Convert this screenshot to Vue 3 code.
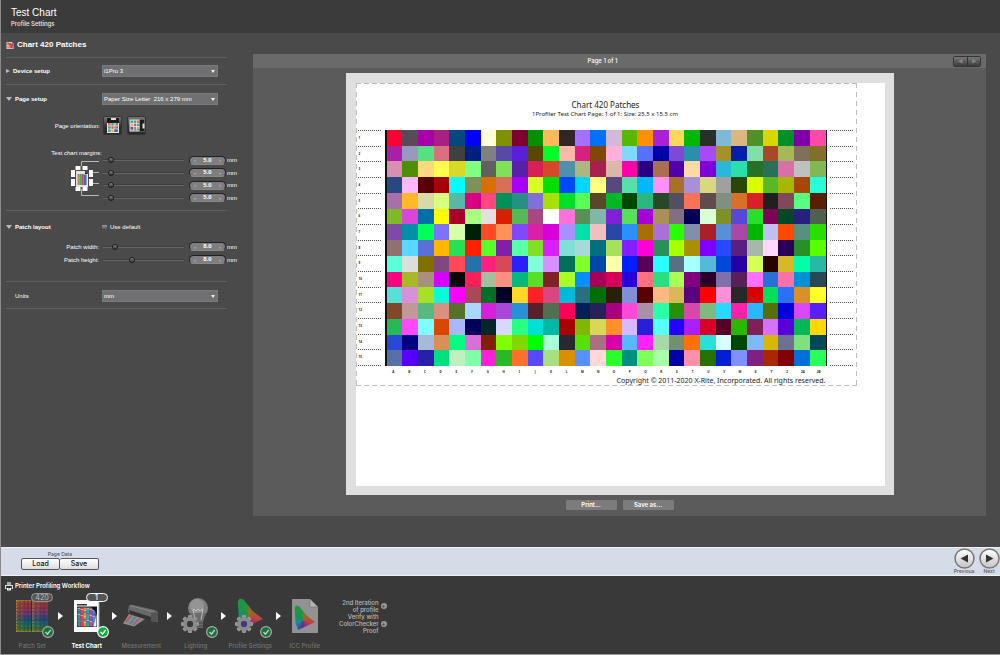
<script setup>
import { ref } from 'vue'

const device = ref('i1Pro 3')
const paper = ref('letter')
const unit = ref('mm')
const useDefault = ref(false)

const margins = ref([
  { name: 'Top margin', at: 7, value: '5.0' },
  { name: 'Left margin', at: 7, value: '5.0' },
  { name: 'Right margin', at: 7, value: '5.0' },
  { name: 'Bottom margin', at: 7, value: '5.0' }
])
const patchSizes = ref([
  { name: 'Patch width:', at: 12, value: '8.0' },
  { name: 'Patch height:', at: 34, value: '8.0' }
])

const rows = [
  'ff0030 574b57 a800a8 a82080 004a80 0000ff ffffd8 809000 800030 009000 ffb85c 302828 a870ff 0070ff d4b8d8 58b800 ff9000 a820d8 ffd858 00b800 283028 80b8d8 d8b880 509028 d8d800 009028 8000a8 ff48a8',
  'a820a8 9898c0 58e080 d87080 404040 002080 808080 5848a8 5820d8 584800 00ff28 ffb8a8 d82080 804800 ffb0d8 80d8ff 5870ff 0000a8 8048d8 2890a8 a848ff a89028 0020a8 80e0a8 a84828 a8b858 807058 807028',
  'd890b0 509000 ffd880 ffff50 d8d828 80ff80 606060 80e058 5820a8 d82058 d84828 5090a8 a8b880 a82050 d8b8a8 ff00a8 280080 a87050 5000a8 ffd8a8 8000d8 28b8d8 28e0a8 287028 287058 d870a8 c0c0c0 80b858',
  '284880 ffb8ff 580000 a80000 00ffff 809058 d87000 d87058 a800ff d8ff28 00e000 0048ff 00d8ff ffff80 584880 58e0a8 00b8ff ff90ff a87028 a890d8 d8d880 a0a0a0 284800 d8ff00 58b828 a8b800 a84800 28ffd8',
  'a870a8 ffb828 d8d8a8 d8ff80 58b8a8 d80080 ff4880 009058 289080 8070d8 a8e000 00e028 58ff58 584828 00b828 004800 28b880 284828 505060 ff7058 604c4c 809080 d87028 d82028 202020 804858 58ff80 582000',
  '80b828 d848d8 0070a8 ffff00 a80028 a8ff80 e0e0e0 d82000 58b858 a84880 ffffff ff70d8 589058 80b8a8 8020d8 58e058 a800d8 a89058 807080 000058 d8ffd8 809028 5848d8 28e028 800058 004828 282080 506050',
  '8048a8 0090a8 00ff58 8070ff d8ffa8 002000 ff4828 ff9058 8048ff d820a8 d800d8 a890ff 00e0a8 f0c0c0 2848a8 2890ff a87000 a870d8 28ff00 8090a8 a82028 5890d8 a848a8 00b800 c0c0f0 ff4800 589080 28e000',
  '907070 58d8ff 5870d8 ffb800 28e058 ff2000 58ff28 8020a8 58ffa8 80e028 d820ff 80e0d8 a8d8d8 007080 a8e058 8020ff ff00d8 289058 a8ff00 a89000 8000ff 2848ff 582080 a8b8a8 ffd8ff 280058 289028 58ff00',
  '58ffd8 d8e0d8 807000 804880 ff4858 2870a8 ff2080 d84858 2820ff 80ffd8 d890ff 007058 80ff28 0048a8 ffffa8 0020ff 580058 28ffff 587080 a8ffff 58b8d8 0048d8 2800a8 d8ff58 280000 d8b828 00ffa8 28b8a8',
  'ff0080 a8b828 a89080 d800ff 080808 ff2058 a0c0a0 ff9080 00b880 58e028 802028 a8ff28 0090ff a80058 d80058 2800d8 ff7080 28e080 a8ff58 800080 280028 8070a8 582058 ff70ff 2870d8 ff70a8 0090d8 284858',
  '58e0d8 d890d8 a8e028 00ffd8 ff00ff a84858 007028 000028 ffd828 ff2028 d84880 00b8d8 287080 007000 282008 8090d8 580000 ffb880 d8b858 580080 ff0000 ff90d8 282828 d80000 00e058 2870ff d89028 ffff28',
  '804828 c09898 58b880 d89080 587028 a8d8ff d820d8 a848d8 2890d8 582028 507050 ff0058 002058 282058 a80080 ff48d8 a890a8 28ffa8 289000 d848a8 80b880 28d8ff ff20a8 28b8ff 587000 0000d8 d848ff 5820ff',
  '28b858 ff48ff 80ffff d84800 a8b8ff 000058 002828 d8d8ff 28ff80 00e0d8 00b8a8 a80000 80b800 d8d858 ff9028 d8b8ff 2820d8 58ffff 2800ff a820ff d80028 580028 28b800 802058 d870ff 5800d8 00b858 ffd800',
  '2848d8 000080 a8b8d8 d89058 00ff80 d870d8 802000 80ff00 80d800 00ff00 a8ffd8 282830 58e000 a87080 d800a8 58b8ff ff20ff a8d8a8 709070 ff7000 28e0d8 d8ffff 004800 80b8ff d8b800 707090 80e080 004858',
  '5870a8 5800ff 2820a8 00e080 c0f0c0 80ffa8 ff20d8 28b828 ff7028 5848ff a8e080 d89000 5890ff ffd8d8 28ff28 009080 80ff58 a8ffa8 0000a8 ff90a8 287000 0020d8 8090ff 802080 a82800 800000 0070d8 28ff58'
]
const patches = rows.flatMap((r) => r.split(' '))
const columns = [...'ABCDEFGHIJKLMNOPQRSTUVWXYZ', '2A', '2B']

const steps = [
  { id: 'patch', label: 'Patch Set', badge: '420', done: true },
  { id: 'chart', label: 'Test Chart', badge: '1', done: true, current: true },
  { id: 'measure', label: 'Measurement' },
  { id: 'light', label: 'Lighting', done: true },
  { id: 'profile', label: 'Profile Settings', done: true },
  { id: 'icc', label: 'ICC Profile' }
]
const teeth = [0, 45, 90, 135, 180, 225, 270, 315]
const stripes = ['#2b9a8c', '#e8405a', '#e98a3c', '#28b0a0', '#e0408c', '#3c8ce0']
</script>

<template>
  <div class="app">
    <header class="head">
      <h1>Test Chart</h1>
      <p>Profile Settings</p>
    </header>

    <main class="main">
      <section class="settings">
        <div class="row title">
          <svg width="8" height="9" viewBox="0 0 9 9">
            <path d="M.5.5h6l2 2v6h-8z" fill="#ccc" />
            <path d="M1.500 1.500h2v2h-2zM5 5h2.500v2.500H5z" fill="#d33" />
            <path d="M3.500 2h2.500v2.500H3.500z" fill="#b36" />
            <path d="M1.500 4.500h2.500v3H1.500z" fill="#e86" />
            <path d="M6 2.500h2V5H6z" fill="#933" />
            <path d="M4 4.500h1.500V7H4z" fill="#c55" />
          </svg>
          <h2>Chart 420 Patches</h2>
        </div>

        <div class="row device">
          <button class="fold"><i class="tri right"></i>Device setup</button>
          <span class="pick">
            <select v-model="device" aria-label="Device"><option>i1Pro 3</option></select>
          </span>
        </div>

        <div class="row page">
          <button class="fold"><i class="tri down"></i>Page setup</button>
          <span class="pick">
            <select v-model="paper" aria-label="Paper size"><option value="letter">Paper Size Letter&nbsp; 216 x 279 mm</option></select>
          </span>
        </div>

        <div class="row orient">
          <span class="lab">Page orientation:</span>
          <button v-for="o in ['Portrait', 'Landscape']" :key="o" class="orient-btn" :aria-label="o">
            <svg width="18" height="17" viewBox="0 0 18 17">
              <g :transform="o === 'Landscape' ? 'rotate(90 9 8.5)' : ''">
                <path d="M3 1h12v15H3z" fill="#e8e8e0" />
                <path d="M3 1h12v5H3z" fill="#1c1c1c" />
                <path d="M7 1h5v2H7z" fill="#ddd" />
                <path d="M4 6h3v3H4zM10 9h3v3h-3z" fill="#e07050" />
                <path d="M7 6h3v3H7zM4 12h3v3H4z" fill="#48a0b0" />
                <path d="M10 6h2v3h-2zM7 12h3v3H7z" fill="#e0b848" />
                <path d="M12 6h2v3h-2zM4 9h3v3H4z" fill="#50a080" />
                <path d="M7 9h3v3H7zM13 12h1v3h-1z" fill="#c058a8" />
                <path d="M13 9h1v3h-1zM10 12h3v3h-3z" fill="#3868b0" />
                <path d="M4 9h10M4 12h10M7 6v9M10 6v9" stroke="#eee" stroke-width=".6" />
              </g>
            </svg>
          </button>
        </div>

        <div class="margins">
          <div class="margin-art">
            <span class="lab">Test chart margins:</span>
            <svg width="32" height="38" viewBox="0 0 32 38">
              <path d="M13.500 7V2.500H31M22 13.500H31M22 24.500H31M13.500 30V36.500H31" fill="none" stroke="#b8b8b8" />
              <path d="M8 12h9l3 3v13H8z" fill="#e4e4e4" />
              <path d="M17 12v3h3z" fill="#222" />
              <path d="M9.500 15h2v11h-2z" fill="#b85" />
              <path d="M11.500 15h2v11h-2z" fill="#4a5" />
              <path d="M13.500 15h2v11h-2z" fill="#c45" />
              <path d="M15.500 15.500h3v10.500h-3z" fill="#46b" />
              <path d="M7.500 7h5v4h-5zM14.500 7h5v4h-5zM3 11h4v7H3zM3 20h4v7H3zM21 11h4v7h-4zM21 20h4v7h-4zM7.500 28h5v4h-5zM14.500 28h5v4h-5z" fill="#fff" />
            </svg>
          </div>
          <div class="sliders">
            <div v-for="m in margins" :key="m.name" class="slide">
              <input v-model="m.at" type="range" :aria-label="m.name" />
              <span class="spin"><button :aria-label="m.name + ' less'">‹</button><input v-model="m.value" type="text" :aria-label="m.name + ' value'" /><button :aria-label="m.name + ' more'">›</button></span>
              <span>mm</span>
            </div>
          </div>
        </div>

        <div class="row patch">
          <button class="fold"><i class="tri down"></i>Patch layout</button>
          <label class="check"><input v-model="useDefault" type="checkbox" />Use default</label>
        </div>
        <div class="sizes">
          <div v-for="s in patchSizes" :key="s.name" class="size">
            <span class="lab">{{ s.name }}</span>
            <div class="slide">
              <input v-model="s.at" type="range" :aria-label="s.name" />
              <span class="spin"><button aria-label="Less">‹</button><input v-model="s.value" type="text" :aria-label="s.name + ' value'" /><button aria-label="More">›</button></span>
              <span>mm</span>
            </div>
          </div>
        </div>

        <div class="row units">
          <label class="unit-label" for="units">Units</label>
          <span class="pick"><select id="units" v-model="unit"><option>mm</option></select></span>
        </div>
      </section>

      <section class="preview">
        <div class="bar">
          <span>Page 1 of 1</span>
          <div class="pager"><button aria-label="Previous page">◀</button><button aria-label="Next page">▶</button></div>
        </div>
        <div class="sheet">
          <div class="chart">
            <h3>Chart 420 Patches</h3>
            <p>1Profiler Test Chart Page: 1 of 1; Size: 25.5 x 15.5 cm</p>
            <div class="body">
              <div class="ticks"><span v-for="n in 15" :key="n">{{ n }}</span></div>
              <div class="patches">
                <i v-for="(c, i) in patches" :key="i" :style="{ background: '#' + c }"></i>
              </div>
              <div class="ticks end"><span v-for="n in 15" :key="n"></span></div>
            </div>
            <div class="cols"><span v-for="c in columns" :key="c">{{ c }}</span></div>
            <footer>Copyright © 2011-2020 X-Rite, Incorporated. All rights reserved.</footer>
          </div>
        </div>
        <div class="actions">
          <button>Print...</button>
          <button>Save as...</button>
        </div>
      </section>
    </main>

    <div class="toolbar">
      <div class="data">
        <span>Page Data</span>
        <div><button>Load</button><button>Save</button></div>
      </div>
      <div class="nav">
        <button><svg width="21" height="21" viewBox="0 0 21 21"><circle cx="10.500" cy="10.500" r="9.500" fill="url(#knob)" stroke="#777" stroke-width="1.500" /><path d="M14 6.500v8l-7.500-4z" fill="#333" /></svg>Previous</button>
        <button><svg width="21" height="21" viewBox="0 0 21 21"><circle cx="10.500" cy="10.500" r="9.500" fill="url(#knob)" stroke="#777" stroke-width="1.500" /><path d="M7 6.500v8l7.500-4z" fill="#333" /></svg>Next</button>
      </div>
    </div>

    <section class="flow">
      <h2>
        <svg width="8" height="9" viewBox="0 0 8 9">
          <path d="M2 0h4v3H2z" fill="#aaa" /><path d="M0 3h8v4H0z" fill="#ddd" /><path d="M1 4h6v2.500H1z" fill="#333" /><path d="M2 6h4v2.500H2z" fill="#fff" />
          <path d="M3 6.500h2v1H3z" fill="#4a9" />
        </svg>
        Printer Profiling Workflow
      </h2>
      <div class="flow-row">
        <ol class="steps">
          <li v-for="(s, i) in steps" :key="s.id" :class="{ current: s.current }">
            <div class="pic">
              <svg v-if="s.id === 'patch'" width="32" height="32" viewBox="0 0 32 32">
                <rect width="32" height="32" fill="url(#rainbow)" />
                <rect width="8" height="32" fill="#9a7a20" opacity=".25" />
                <rect x="16" width="8" height="32" fill="#8a8a40" opacity=".2" />
                <path d="M0 4h32M0 8h32M0 12h32M0 16h32M0 20h32M0 24h32M0 28h32M4 0v32M8 0v32M12 0v32M20 0v32M24 0v32M28 0v32" stroke="#222" stroke-width=".6" opacity=".5" />
                <path d="M15.500 0v32" stroke="#2b2b2b" opacity=".8" />
                <path d="M.5.500h31M.5 31.500h31M.5 0v32M17 0v32" fill="none" stroke="#a58a38" stroke-dasharray="2 1" opacity=".8" />
              </svg>
              <svg v-else-if="s.id === 'chart'" width="26" height="32" viewBox="0 0 26 32">
                <path d="M0 0h25v32H0z" fill="#fafafa" />
                <path d="M3 4h10v1.500H3z" fill="#333" />
                <path d="M3 6.500h20V27H3z" fill="#222" />
                <g v-for="(c, k) in stripes" :key="c">
                  <path :d="`M${5 + k * 3} 7.500v19`" :stroke="c" stroke-width="3" />
                  <path :d="`M${5 + k * 3} ${8 + (k % 3)}v18`" stroke="#f4b0c8" stroke-width="3" stroke-dasharray="1 5" opacity=".7" />
                  <path :d="`M${5 + k * 3} ${11 + (k % 2) * 2}v14`" stroke="#2070c0" stroke-width="3" stroke-dasharray="2 6" opacity=".6" />
                </g>
                <path d="M17 7l5.500 0v6z" fill="#111" /><path d="M22.500 14l-3 12.500h3z" fill="#eee" />
                <path d="M25 1v30.500" stroke="#aaa" />
              </svg>
              <svg v-else-if="s.id === 'measure'" width="36" height="32" viewBox="0 0 36 32">
                <path d="M6 14l16 5-11 7.500-11-3z" fill="#8c8c8c" />
                <path d="M9 15l-6 7" stroke="#b55" stroke-width="1.500" /><path d="M13 16l-6 8" stroke="#48a" stroke-width="1.500" /><path d="M17 18l-7 7" stroke="#a56" stroke-width="1.500" />
                <path d="M6 6q1-2 4-1l22 5q3 1 3 4v7q0 2-3 1L8 14q-3-1-3-4z" fill="#696969" />
                <path d="M7 5.500l24 6.500q3 2 2 5l-1 4" fill="none" stroke="#888" />
                <path d="M6 10l22 7v4L7 14z" fill="#333" />
                <path d="M28 13q5-2 7 1v7q-3 2-7 0z" fill="#555" />
              </svg>
              <svg v-else-if="s.id === 'light'" width="32" height="36" viewBox="0 0 32 36">
                <circle cx="18" cy="10" r="10" fill="#808080" /><path d="M10 15h16l-3 9v6h-9v-6z" fill="#6c6c6c" />
                <circle cx="17" cy="8" r="7" fill="#a4a4a4" opacity=".55" />
                <path d="M15 22l-2-11 3 2 2-2 2 2 3-2-2 11" fill="none" stroke="#ccc" stroke-width=".8" />
                <path d="M14 25h9M14 28h9" stroke="#444" />
                <g transform="translate(10 26)"><rect v-for="t in teeth" :key="t" x="-2" y="-9" width="4" height="5" rx="1" fill="#969696" :transform="`rotate(${t})`" /><circle r="5" fill="none" stroke="#8a8a8a" stroke-width="4" /><circle r="3" fill="#383838" /></g>
              </svg>
              <svg v-else-if="s.id === 'profile'" width="32" height="36" viewBox="0 0 32 36">
                <foreignObject x="3" y="0" width="28" height="32"><div class="gamut"></div></foreignObject>
                <g transform="translate(10 26)"><rect v-for="t in teeth" :key="t" x="-2" y="-9" width="4" height="5" rx="1" fill="#969696" :transform="`rotate(${t})`" /><circle r="5" fill="none" stroke="#8a8a8a" stroke-width="4" /><circle r="3" fill="#438" /></g>
              </svg>
              <svg v-else width="26" height="34" viewBox="0 0 26 34">
                <path d="M0 0h18l8 8v26H0z" fill="#929292" /><path d="M18 0v8h8z" fill="#b4b4b4" stroke="#666" stroke-width=".5" />
                <foreignObject x="2" y="6" width="22" height="26"><div class="gamut small"></div></foreignObject>
              </svg>
              <b v-if="s.badge" class="badge">{{ s.badge }}</b>
              <svg v-if="s.done" class="tick" width="12" height="12" viewBox="0 0 12 12">
                <circle cx="6" cy="6" r="5.400" :fill="s.current ? '#0cae3a' : '#18733a'" :stroke="s.current ? '#fff' : '#aaa'" stroke-width="1.200" />
                <path d="M3.500 6l2 2.200 3.200-4.400" fill="none" :stroke="s.current ? '#fff' : '#ccc'" stroke-width="1.400" />
              </svg>
              <i v-if="i < 5" class="next"></i>
            </div>
            <span>{{ s.label }}</span>
          </li>
        </ol>
        <div class="extras">
          <p>2nd Iteration<br />of profile</p><button aria-label="Add second iteration">+</button>
          <p>Verify with<br />ColorChecker<br />Proof</p><button aria-label="Add ColorChecker proof">+</button>
        </div>
      </div>
    </section>

    <svg class="defs" width="0" height="0">
      <defs>
        <linearGradient id="knob" x2="0" y2="1"><stop stop-color="#fff" /><stop offset="1" stop-color="#c4c4c4" /></linearGradient>
        <linearGradient id="rainbow" x2="0" y2="1"><stop stop-color="#8a4c3a" /><stop offset=".2" stop-color="#9c2f48" /><stop offset=".42" stop-color="#6c3a74" /><stop offset=".6" stop-color="#204a80" /><stop offset=".75" stop-color="#1a6a68" /><stop offset=".9" stop-color="#2a6c3c" /><stop offset="1" stop-color="#6a6c30" /></linearGradient>
      </defs>
    </svg>
  </div>
</template>

<style>
body { background: #4a4a4a; }
</style>

<style scoped>
* { box-sizing: border-box; margin: 0; }
.app { min-height: 100vh; display: flex; flex-direction: column; border-left: 1px solid #8a8a8a; border-bottom: 1px solid #999; background: #4a4a4a; color: #eee; font: 500 6px/8px Inter, "Liberation Sans", sans-serif; }
button, input, select { font: inherit; color: inherit; border: 0; padding: 0; background: none; }
.defs { position: absolute; }
.head { height: 33px; padding: 7px 10px 0; background: #3b3b3b; }
.head h1 { font: 400 10px/12px "Liberation Sans", sans-serif; color: #fff; }
.head p { line-height: 9px; }
.main { flex: 1; display: flex; gap: 26px; padding-right: 14px; }

.settings { width: 226px; padding-left: 5px; flex: none; font-family: "Liberation Sans", sans-serif; color: #fff; }
.row { display: flex; align-items: center; }
.row > .fold, .unit-label, .lab { width: 96px; flex: none; }
.title, .device, .margins, .sizes, .units { border-bottom: 1px solid #5f5f5f; }
.title { height: 25px; gap: 3px; }
.title h2 { font-size: 8px; font-weight: 700; color: #fff; }
.device { height: 27px; }
.page { height: 28px; }
.orient { height: 25px; gap: 5px; }
.orient .lab { margin-right: -4px; padding-right: 2px; }
.lab { text-align: right; padding-right: 3px; white-space: nowrap; }
.fold { display: flex; align-items: center; gap: 3px; font-weight: 700; color: #fff; }
.tri { width: 0; height: 0; border: 2px solid transparent; }
.tri.right { border-left: 4px solid #bbb; border-right: 0; }
.tri.down { border-top: 4px solid #bbb; border-bottom: 0; border-left-width: 3px; border-right-width: 3px; }
.pick { position: relative; width: 116px; height: 12px; }
.pick select { display: block; width: 100%; height: 100%; appearance: none; background: #707072; border: 1px solid #7a7a7c; padding: 0 1px; line-height: 8px; }
.pick::after { content: ""; position: absolute; right: 3px; top: 5px; border: 2px solid transparent; border-top: 3px solid #eee; border-bottom: 0; pointer-events: none; }
.orient-btn { width: 19px; height: 19px; display: grid; place-items: center; background: linear-gradient(#777, #2c2c2c 60%); border: 1px solid #333; border-radius: 2px; }
.margins { display: flex; height: 73px; padding-top: 10px; }
.margin-art { width: 96px; flex: none; display: flex; flex-direction: column; align-items: flex-end; }
.margin-art .lab { padding-right: 0; margin-top: 1px; line-height: 8px; }
.margin-art svg { margin: 2px 2px 0 0; }
.sliders { height: 50px; margin-top: 6px; display: grid; grid-template-rows: repeat(4, 1fr); align-items: center; }
.slide { display: flex; align-items: center; }
.slide > input { appearance: none; width: 81px; height: 10px; margin: 0 5px 0 1px; background: linear-gradient(#2c2c2c, #777) center / 100% 2px no-repeat; }
.slide > input::-webkit-slider-thumb { appearance: none; width: 6px; height: 6px; border-radius: 50%; border: 1px solid #1c1c1c; background: linear-gradient(#888, #333); }
.spin { display: flex; align-items: center; justify-content: space-between; width: 37px; height: 9px; margin-right: 1px; padding: 0 4px; border: 1px solid #222; border-bottom-color: #888; border-radius: 5px; background: #7e7e81; }
.spin input { width: 18px; text-align: center; line-height: 7px; height: 7px; font-weight: 700; }
.spin button { line-height: 6px; color: #ccc; }
.patch { height: 26px; margin-top: 3px; }
.check { display: flex; align-items: center; gap: 3px; }
.check input { appearance: none; width: 5px; height: 5px; background: linear-gradient(#9a9aa0, #444); }
.sizes { height: 42px; }
.size { display: flex; align-items: center; height: 13px; }
.units { height: 25px; margin-top: 2px; }
.unit-label { padding-left: 9px; }

.preview { flex: 1; align-self: flex-start; margin-top: 21px; background: #5b5b5b; display: flex; flex-direction: column; align-items: center; }
.bar { align-self: stretch; height: 14px; background: #6a6a6b; display: grid; grid-template-columns: 1fr auto 1fr; align-items: center; }
.bar span { grid-column: 2; color: #fff; padding-right: 34px; }
.pager { justify-self: end; display: flex; margin-right: 5px; border: 1px solid #333; border-radius: 2px; }
.pager button { width: 13px; height: 9px; font-size: 5px; line-height: 7px; color: #888; background: linear-gradient(#777, #3c3c3c); }
.pager button + button { border-left: 1px solid #333; }
.sheet { width: 100%; max-width: 548px; margin-top: 5px; padding: 10px; padding-bottom: 109px; background: linear-gradient(#fff, #fff) 10px 10px / calc(100% - 19px) calc(100% - 19px) no-repeat #dfdfdf; }
.chart {
  --h: repeating-linear-gradient(90deg, #c0c0c0 0 5px, transparent 5px 8px);
  --v: repeating-linear-gradient(#c0c0c0 0 5px, transparent 5px 9px);
  max-width: 501px; height: 303px; padding: 1px; color: #222; font-family: "Noto Sans", sans-serif; text-align: center; font-weight: 400;
  background: var(--h) top / 100% 1px no-repeat, var(--h) bottom / 100% 1px no-repeat, var(--v) left / 1px 100% no-repeat, var(--v) right / 1px 100% no-repeat;
}
.chart h3 { font-size: 8px; line-height: 11px; font-weight: 400; margin-top: 15px; padding-right: 1px; }
.chart p { font-size: 6px; line-height: 8px; padding-right: 2px; }
.body { display: flex; margin-top: 12px; padding: 0 3px 0 1px; height: 236px; }
.patches { flex: 1; display: grid; grid-template-columns: repeat(28, 1fr); grid-template-rows: repeat(15, 1fr); border: solid #111; border-width: 0 1px 0 2px; }
.ticks { width: 23px; margin-right: 4px; display: grid; grid-template-rows: repeat(15, 1fr); border-bottom: 1px dotted #555; }
.ticks.end { margin: 0 0 0 3px; }
.ticks span { border-top: 1px dotted #555; font-size: 3px; line-height: 14px; text-align: left; padding-left: 1px; font-weight: 700; }
.cols { display: grid; grid-template-columns: repeat(28, 1fr); margin: 3px 29px 0 29px; font-size: 3px; line-height: 7px; font-weight: 700; }
.chart footer { text-align: right; padding-right: 30px; font-size: 7px; line-height: 10px; white-space: nowrap; }
.actions { display: flex; gap: 6px; padding: 5px 0 6px; }
.actions button { width: 51px; height: 10px; border-radius: 1px; background: #7c7c7f; color: #fff; font-weight: 600; }

.toolbar { height: 29px; background: #d5dce8; border-top: 1px solid #eef2f8; border-bottom: 1px solid #eef2f8; display: flex; justify-content: space-between; color: #555; }
.data { padding: 2px 0 0 20px; text-align: center; font-size: 5px; }
.data div { display: flex; }
.data button { width: 39px; height: 12px; font-size: 7px; line-height: 10px; color: #111; border: 1px solid #555; border-radius: 2px; background: linear-gradient(#fff, #ddd); }
.data button + button { border-left: 0; }
.nav { display: flex; gap: 3px; }
.nav button { width: 22px; display: flex; flex-direction: column; align-items: center; font-size: 5px; line-height: 5px; }

.flow { background: #393939; min-height: 78px; padding: 6px 0 0 4px; }
.flow h2 { display: flex; align-items: center; gap: 2px; font-size: 6px; line-height: 8px; height: 8px; font-weight: 600; color: #fff; }
.flow-row { display: flex; }
.steps { width: 327px; display: grid; grid-template-columns: repeat(6, 1fr); padding: 0; list-style: none; text-align: center; color: #737373; }
.steps li { white-space: nowrap; }
.current { color: #fff; font-weight: 700; }
.pic { position: relative; height: 52px; display: flex; align-items: center; justify-content: center; }
.badge { position: absolute; left: 26px; top: 3px; width: 22px; height: 9px; line-height: 7px; border: 1px solid #999; border-radius: 5px; background: #555; color: #aaa; font-weight: 500; font-size: 7px; }
.current .badge { border-color: #fff; color: #fff; }
.tick { position: absolute; left: 37px; bottom: 4px; }
.next { position: absolute; right: -3px; top: 22px; border: 4px solid transparent; border-left: 5px solid #fff; border-right: 0; }
.gamut { width: 26px; height: 31px; clip-path: polygon(3% 12%, 10% 2%, 25% 5%, 60% 42%, 100% 68%, 20% 100%, 8% 75%); background: conic-gradient(from 0deg at 42% 62%, #7a7b24, #bd4a35 25%, #b42b66 36%, #49399a 52%, #2485a0 68%, #179157 84%, #26973d); }
.gamut.small { width: 21px; height: 25px; }
.extras { display: grid; grid-template-columns: 1fr 7px; column-gap: 2px; align-content: start; align-items: center; padding: 9px 0 0 7px; text-align: right; font-size: 6px; line-height: 7px; color: #bbb; }
.extras button { width: 6px; height: 6px; border-radius: 50%; background: #999; color: #333; line-height: 6px; display: grid; place-items: center; }
</style>
